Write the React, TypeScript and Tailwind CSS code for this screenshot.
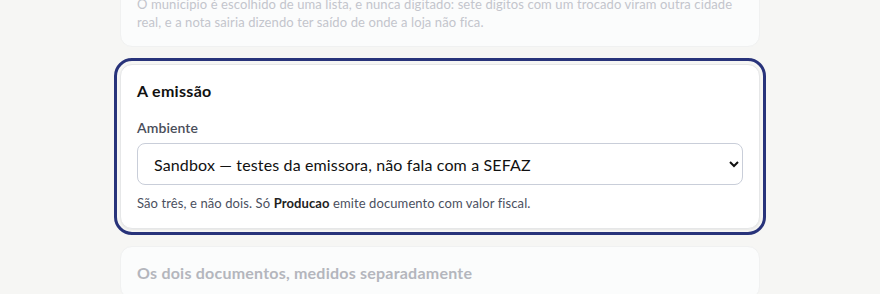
import { useState } from 'react'

const AMBIENTES = [
  { value: 'sandbox', label: 'Sandbox — testes da emissora, não fala com a SEFAZ' },
  { value: 'homologacao', label: 'Homologacao — SEFAZ de testes, sem valor fiscal' },
  { value: 'producao', label: 'Producao — documento com valor fiscal' },
]

function FadedCard({ children }: { children: React.ReactNode }) {
  return (
    <section className="rounded-xl border border-[#f0f1f1] bg-[#fbfcfc] px-4 pt-4 pb-[15px]">
      {children}
    </section>
  )
}

export default function App() {
  const [ambiente, setAmbiente] = useState('sandbox')

  return (
    <div
      className="min-h-[294px] overflow-hidden bg-[#f6f6f4]"
      style={{ fontFamily: 'Lato, "Noto Sans", sans-serif' }}
    >
      <div className="mx-auto -mt-[50px] flex w-[640px] flex-col gap-[17px]">
        {/* Previous section, faded */}
        <FadedCard>
          <h2 className="mb-2 text-base leading-5 font-bold tracking-[0.2px] text-[#b4b6bd]">O endereço</h2>
          <p className="text-[13px] leading-[18px] tracking-[0.1px] text-[#c3c5cc]">
            O município é escolhido de uma lista, e nunca digitado: sete dígitos com um trocado viram outra cidade
            real, e a nota sairia dizendo ter saído de onde a loja não fica.
          </p>
        </FadedCard>

        {/* Active section */}
        <section className="rounded-xl border border-[#e6e7e8] bg-white px-4 pt-4 pb-4 shadow-[0_1px_2px_rgba(0,0,0,0.06)] outline-[3px] outline-offset-[3px] outline-[#28337a] outline-solid">
          <h2 className="mb-[17px] text-base leading-5 font-bold tracking-[0.3px] text-[#111111]">A emissão</h2>
          <label
            htmlFor="ambiente"
            className="mb-[5px] block text-sm leading-5 font-semibold tracking-[0.1px] text-[#4a4e5a]"
          >
            Ambiente
          </label>
          <select
            id="ambiente"
            value={ambiente}
            onChange={(e) => setAmbiente(e.target.value)}
            className="block h-[42px] w-full rounded-lg border border-[#c9ced9] bg-white pr-1.5 pl-3 text-base tracking-[0.14px] text-[#111111]"
          >
            {AMBIENTES.map((a) => (
              <option key={a.value} value={a.value}>
                {a.label}
              </option>
            ))}
          </select>
          <p className="mt-[9px] text-[13px] leading-[18px] tracking-[0.1px] text-[#4b5060]">
            São três, e não dois. Só <strong className="font-bold text-[#222222]">Producao</strong> emite documento
            com valor fiscal.
          </p>
        </section>

        {/* Next section, faded */}
        <FadedCard>
          <h2 className="text-base leading-5 font-bold tracking-[0.22px] text-[#b4b6bd]">
            Os dois documentos, medidos separadamente
          </h2>
        </FadedCard>
      </div>
    </div>
  )
}
